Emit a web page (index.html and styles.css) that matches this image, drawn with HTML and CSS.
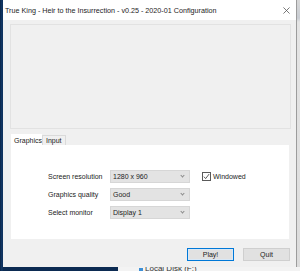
FILE: index.html
```html
<!DOCTYPE html>
<html lang="en">
<head>
  <meta charset="UTF-8">
  <title>True King - Heir to the Insurrection - v0.25 - 2020-01 Configuration</title>
  <link rel="stylesheet" href="styles.css">
</head>
<body>
  <div class="screen">
    <div class="top-row">
      <div class="window">
        <div class="titlebar">
          <span class="title">True King - Heir to the Insurrection - v0.25 - 2020-01 Configuration</span>
          <svg class="close" viewBox="0 0 8 8">
            <path d="M0.5 0.5L7.5 7.5M7.5 0.5L0.5 7.5" />
          </svg>
        </div>

        <div class="client">
          <div class="banner"></div>

          <div class="tabs">
            <div class="tab active">Graphics</div>
            <div class="tab">Input</div>
          </div>

          <div class="tab-panel">
            <div class="settings">
              <div class="setting">
                <span class="label">Screen resolution</span>
                <div class="combo">1280 x 960<span class="chevron"></span></div>
                <label class="check">
                  <span class="box">
                    <svg viewBox="0 0 8 8"><path d="M1 4.2L3 6.4L7 1.2" /></svg>
                  </span>
                  Windowed
                </label>
              </div>
              <div class="setting">
                <span class="label">Graphics quality</span>
                <div class="combo">Good<span class="chevron"></span></div>
              </div>
              <div class="setting">
                <span class="label">Select monitor</span>
                <div class="combo">Display 1<span class="chevron"></span></div>
              </div>
            </div>
          </div>

          <div class="actions">
            <button class="button default">Play!</button>
            <button class="button">Quit</button>
          </div>
        </div>
      </div>
      <div class="edge"></div>
    </div>

    <div class="desk">
      <div class="explorer">
        <span class="drive"></span>
        <span class="drive-name">Local Disk (F:)</span>
      </div>
    </div>
  </div>
</body>
</html>
```

FILE: styles.css
```css
:root {
  --desktop: #0c2b52;
  --client: #f0f0f0;
  --line: #dadada;
  --text: #222222;
  --accent: #0078d7;
}

* {
  margin: 0;
  padding: 0;
  box-sizing: border-box;
}

body {
  font-family: "Liberation Sans", Arial, sans-serif;
  font-size: 7px;
  color: var(--text);
  background-color: var(--desktop);
  width: 300px;
  height: 271px;
  overflow: hidden;
}

.screen {
  display: flex;
  flex-direction: column;
  height: 271px;
  background: linear-gradient(90deg, #0a2447 0, #123a6a 2px, #0c2b52 3px);
}

.top-row {
  display: flex;
  height: 267px;
}

.window {
  margin-left: 3px;
  width: 294px;
  display: flex;
  flex-direction: column;
  border-right: 1px solid #9c9c9c;
  background-color: var(--client);
}

.titlebar {
  height: 20px;
  background-color: white;
  display: flex;
  align-items: center;
  justify-content: space-between;
  padding: 0 6px 0 2px;
}

.title {
  font-size: 7.2px;
  color: #1c1c1c;
}

.close {
  width: 7px;
  height: 7px;
  stroke: #555;
  stroke-width: 0.9;
  fill: none;
}

.client {
  flex: 1;
  display: flex;
  flex-direction: column;
  padding: 4px 0 0 7px;
}

.banner {
  width: 281px;
  height: 105px;
  border: 1px solid #e2e2e2;
}

.tabs {
  display: flex;
  align-items: flex-end;
  margin-top: 4px;
  padding-left: 1px;
  height: 12px;
}

.tab {
  height: 10px;
  padding: 0 3px;
  line-height: 10px;
  border: 1px solid var(--line);
  border-bottom: none;
  background-color: #f0f0f0;
}

.tab.active {
  height: 12px;
  line-height: 11px;
  width: 31px;
  padding: 0 2px;
  background-color: white;
  border-color: white;
  margin-bottom: -1px;
}

.tab-panel {
  margin-left: 1px;
  width: 278px;
  height: 94px;
  background-color: white;
  padding: 25px 0 0 37px;
}

.settings {
  display: flex;
  flex-direction: column;
  gap: 5px;
}

.setting {
  display: flex;
  align-items: center;
  height: 13px;
}

.label {
  width: 62px;
}

.combo {
  width: 80px;
  height: 13px;
  padding-left: 2px;
  line-height: 12px;
  background-color: #e3e3e3;
  border: 1px solid #d6d6d6;
  display: flex;
  justify-content: space-between;
}

.chevron {
  width: 3px;
  height: 3px;
  margin: 3px 5px 0 0;
  border-right: 1px solid #8a8a8a;
  border-bottom: 1px solid #8a8a8a;
  transform: rotate(45deg);
}

.check {
  display: flex;
  align-items: center;
  gap: 2px;
  margin-left: 12px;
}

.box {
  width: 9px;
  height: 9px;
  border: 1px solid #5a5a5a;
  background-color: white;
  display: flex;
}

.box svg {
  width: 7px;
  height: 7px;
  fill: none;
  stroke: #333;
  stroke-width: 0.9;
}

.actions {
  display: flex;
  justify-content: flex-end;
  gap: 9px;
  margin-top: 9px;
  padding-right: 6px;
}

.button {
  width: 47px;
  height: 13px;
  font-family: inherit;
  font-size: 7px;
  color: var(--text);
  background-color: #e1e1e1;
  border: 1px solid #cfcfcf;
}

.button.default {
  border-color: var(--accent);
  box-shadow: inset 0 0 0 1px #d9e8f6;
}

.edge {
  flex: 1;
  background: linear-gradient(180deg, #d8d8d8 0, #c9cdd3 18px, #e4e4e4 22px, #dcdcdc 100%);
}

.desk {
  flex: 1;
  display: flex;
  justify-content: flex-end;
  overflow: hidden;
}

.explorer {
  width: 182px;
  background-color: #f3f3f3;
  display: flex;
  align-items: flex-start;
  gap: 2px;
  padding-left: 21px;
}

.drive {
  width: 4px;
  height: 4px;
  margin-top: 1px;
  background-color: #3c8fd6;
}

.drive-name {
  margin-top: -3px;
  font-size: 8px;
  color: #333;
}
```
